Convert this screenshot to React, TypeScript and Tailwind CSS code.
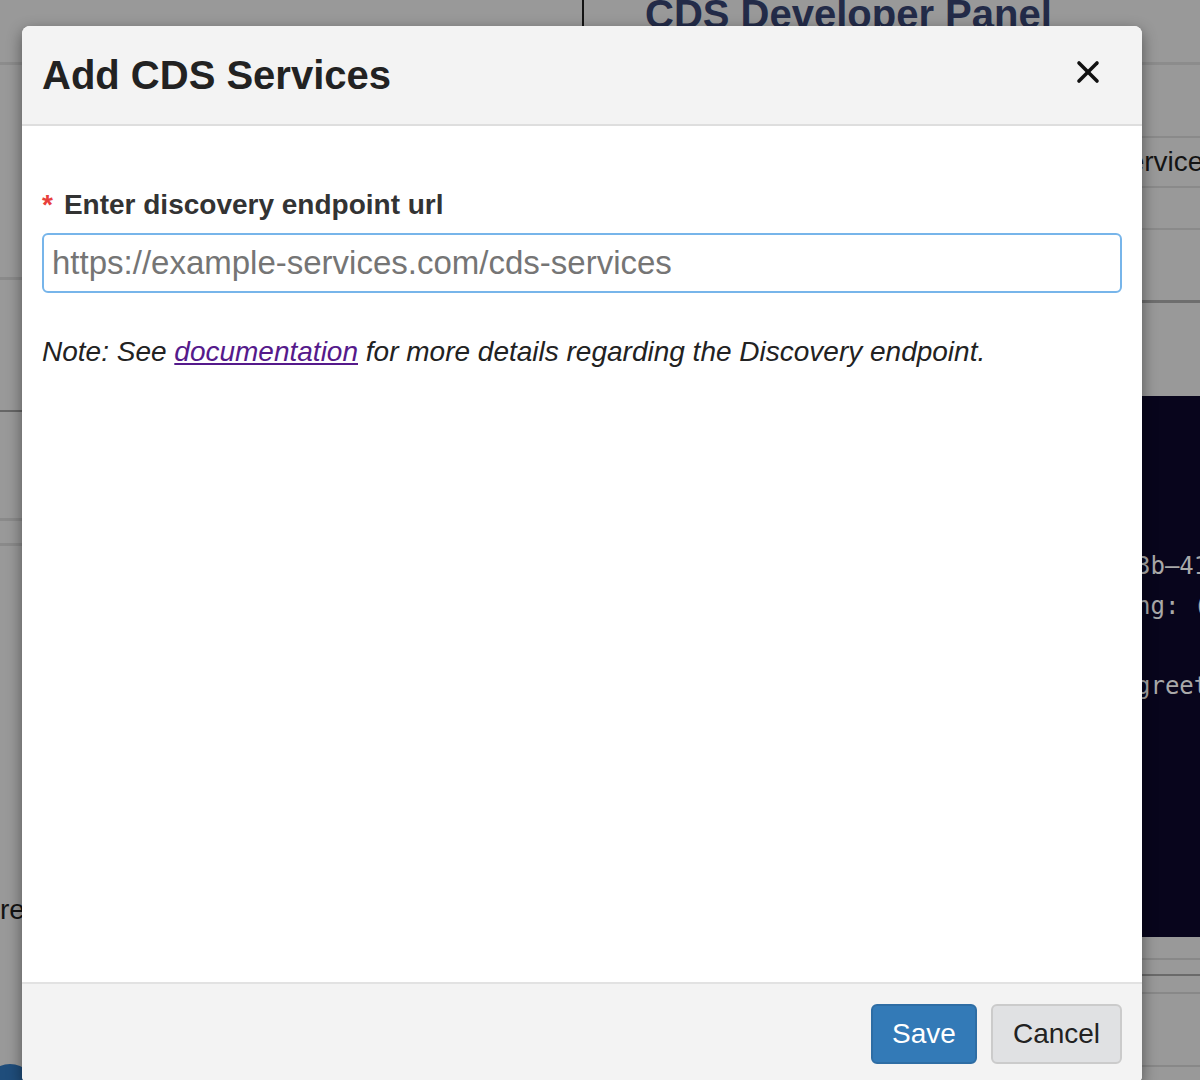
import { X } from 'lucide-react';

const sans = { fontFamily: '"Liberation Sans", Arial, sans-serif' };

function BackgroundPage() {
  return (
    <div className="flex w-[1200px] h-[1080px] bg-[#999999]">
      {/* Left column */}
      <div className="w-[584px] shrink-0 flex flex-col">
        <div className="h-[65px] flex border-b-[3px] border-[#8c8c8c]">
          <div className="w-[584px] border-r-2 border-[#141414]" />
        </div>
        <div className="h-[215px] border-b-[3px] border-[#8a8a8a]" />
        <div className="h-[132px] border-b-2 border-[#666666]" />
        <div className="h-[109px] border-b-[3px] border-[#8a8a8a]" />
        <div className="h-[25px] border-b-[3px] border-[#8a8a8a]" />
        <div className="h-[344px]" />
        <div className="h-[40px] leading-[40px] text-[28px] text-[#141414]">re</div>
      </div>

      {/* Right column */}
      <div className="flex-1 flex flex-col overflow-hidden">
        <div className="h-[65px] border-b-[3px] border-[#8c8c8c] pl-[61px]">
          <div className="-mt-[6px] leading-[40px] text-[40px] font-bold text-[#232b48] whitespace-nowrap">
            CDS Developer Panel
          </div>
        </div>
        <div className="h-[73px] border-b-2 border-[#8a8a8a]" />
        <div className="h-[50px] border-b-2 border-[#8a8a8a] pl-[526px] leading-[48px] text-[28px] text-[#141414] whitespace-nowrap">
          Services
        </div>
        <div className="h-[42px] border-b-2 border-[#8a8a8a]" />
        <div className="h-[73px] border-b-[3px] border-[#6e6e6e]" />
        <div className="h-[93px]" />
        <div
          className="h-[541px] bg-[#08051c] pt-[150px] pl-[552px] text-[24px] leading-[40px] text-[#a9a9a9] whitespace-pre"
          style={{ fontFamily: '"DejaVu Sans Mono", monospace' }}
        >
          <div>3b–41f2</div>
          <div>ng: (</div>
          <div> </div>
          <div>greet</div>
        </div>
        <div className="h-[23px] border-b-2 border-[#888888]" />
        <div className="h-[16px] border-b-2 border-[#6a6a6a]" />
        <div className="h-[18px] border-b-2 border-[#888888]" />
        <div className="h-[73px] border-b-2 border-[#888888]" />
      </div>
    </div>
  );
}

export default function App() {
  return (
    <div className="relative w-[1200px] h-[1080px] overflow-hidden" style={sans}>
      <BackgroundPage />

      {/* floating button peeking at bottom-left */}
      <div className="absolute left-[-16px] top-[1064px] w-[52px] h-[52px] rounded-full bg-[#1f4d7b]" />

      {/* Modal */}
      <div className="absolute left-[22px] top-[26px] w-[1120px] h-[1058px] rounded-[8px] bg-white shadow-[0_5px_15px_rgba(0,0,0,0.45)] flex flex-col overflow-hidden">
        <div className="h-[100px] shrink-0 bg-[#f3f3f3] border-b-2 border-[#dedede] flex items-center justify-between pl-[20px] pr-[36px]">
          <h1 className="text-[40px] font-bold text-[#222222] leading-[46px]">Add CDS Services</h1>
          <button className="-mt-[6px] text-[#111111]">
            <X size={36} strokeWidth={2.4} />
          </button>
        </div>

        <div className="flex-1 px-[20px] pt-[59px]">
          <div className="h-[40px] mb-[8px] flex items-center text-[28px] leading-[40px] font-bold text-[#333333]">
            <span className="text-[#e8403c] mr-[11px]">*</span>
            Enter discovery endpoint url
          </div>
          <input
            placeholder="https://example-services.com/cds-services"
            className="w-full h-[60px] rounded-[6px] border-2 border-[#77b5ea] px-[8px] text-[33px] text-[#333333] placeholder:text-[#757575] outline-none"
            style={sans}
          />
          <p className="mt-[39px] text-[28px] leading-[40px] italic text-[#222222]">
            Note: See{' '}
            <a href="#" className="text-[#551a8b] underline">
              documentation
            </a>{' '}
            for more details regarding the Discovery endpoint.
          </p>
        </div>

        <div className="h-[102px] shrink-0 bg-[#f3f3f3] border-t-2 border-[#e2e2e2] pt-[20px] px-[20px] flex justify-end items-start gap-[14px]">
          <button className="w-[106px] h-[60px] rounded-[6px] bg-[#337ab7] border-2 border-[#2e6da4] text-white text-[28px]">
            Save
          </button>
          <button className="w-[131px] h-[60px] rounded-[6px] bg-[#e0e1e3] border-2 border-[#cbcbcb] text-[#222222] text-[28px]">
            Cancel
          </button>
        </div>
      </div>
    </div>
  );
}
